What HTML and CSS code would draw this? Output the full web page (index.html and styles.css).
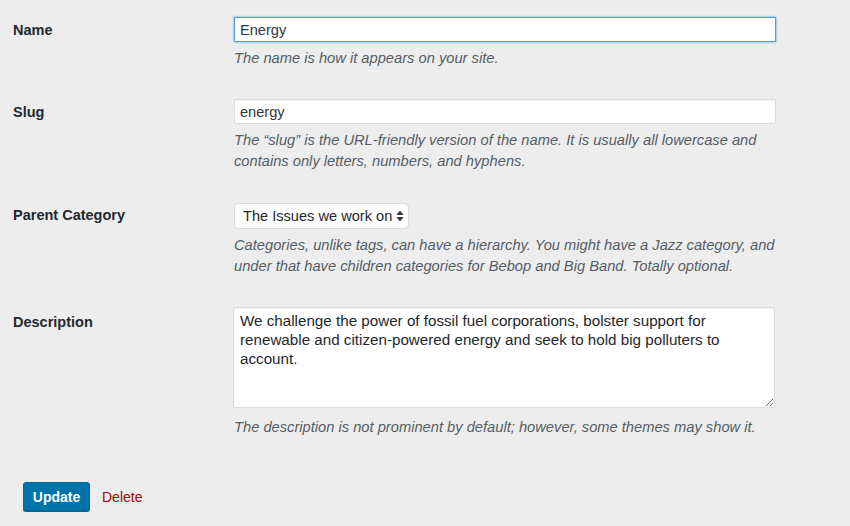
FILE: index.html
```html
<!DOCTYPE html>
<html>
<head>
<meta charset="utf-8">
<link rel="stylesheet" href="styles.css">
</head>
<body>
<form class="form">
  <div class="row">
    <label class="label" for="name">Name</label>
    <div class="field">
      <input id="name" class="input input-focus" type="text" value="Energy">
      <p class="desc">The name is how it appears on your site.</p>
    </div>
  </div>
  <div class="row">
    <label class="label" for="slug">Slug</label>
    <div class="field">
      <input id="slug" class="input" type="text" value="energy">
      <p class="desc">The “slug” is the URL-friendly version of the name. It is usually all lowercase and contains only letters, numbers, and hyphens.</p>
    </div>
  </div>
  <div class="row">
    <label class="label" for="parent">Parent Category</label>
    <div class="field">
      <div class="select">
        <span class="select-text">The Issues we work on</span>
        <svg class="select-arrows" width="8" height="12" viewBox="0 0 8 12"><path d="M4 0.5 L7.5 5 L0.5 5 Z M4 11.5 L7.5 7 L0.5 7 Z" fill="#333"/></svg>
      </div>
      <p class="desc desc-select">Categories, unlike tags, can have a hierarchy. You might have a Jazz category, and under that have children categories for Bebop and Big Band. Totally optional.</p>
    </div>
  </div>
  <div class="row">
    <label class="label label-desc" for="description">Description</label>
    <div class="field">
      <textarea id="description" class="textarea">We challenge the power of fossil fuel corporations, bolster support for renewable and citizen-powered energy and seek to hold big polluters to account.</textarea>
      <p class="desc desc-area">The description is not prominent by default; however, some themes may show it.</p>
    </div>
  </div>
  <div class="actions">
    <button type="button" class="button">Update</button>
    <a class="delete" href="#">Delete</a>
  </div>
</form>
</body>
</html>
```

FILE: styles.css
```css
html, body {
  margin: 0;
  padding: 0;
  background: #ededed;
}
body {
  font-family: "Liberation Sans", Arial, sans-serif;
  font-size: 14px;
  color: #23282d;
  width: 850px;
  height: 526px;
  overflow: hidden;
}
.form {
  padding: 1px 0 0 13px;
  margin: 0;
}
.row {
  display: flex;
  padding: 16px 0 14px;
}
.label {
  flex: none;
  width: 221px;
  font-weight: bold;
  font-size: 14.5px;
  line-height: 20px;
  padding-top: 3px;
  color: #23282d;
}
.label-desc {
  padding-top: 5px;
}
.field {
  width: 542px;
}
.input {
  display: block;
  box-sizing: border-box;
  width: 542px;
  height: 25px;
  margin: 0;
  padding: 0 5px;
  font: 14.6px "Liberation Sans", Arial, sans-serif;
  color: #32373c;
  background: #fff;
  border: 1px solid #dcdcdc;
  box-shadow: inset 0 1px 2px rgba(0,0,0,.07);
  outline: none;
  border-radius: 0;
}
.input-focus {
  border-color: #5b9dd9;
  box-shadow: 0 0 2px rgba(30,140,190,.8);
}
.desc {
  margin: 6px 0 0;
  font-style: italic;
  font-size: 14.7px;
  line-height: 21px;
  color: #555d66;
}
.select {
  box-sizing: border-box;
  display: inline-flex;
  align-items: center;
  height: 26px;
  margin-top: 1px;
  padding: 0 4px 0 8px;
  background: #fff;
  border: 1px solid #dcdcdc;
  border-radius: 4px;
  color: #23282d;
  gap: 4px;
  font-size: 14.6px;
}
.select-text {
  line-height: 20px;
}
.desc-select {
  margin-top: 6px;
}
.textarea {
  display: block;
  box-sizing: border-box;
  width: 542px;
  height: 101px;
  margin: 0 0 0 -1px;
  padding: 3px 6px;
  font: 15.2px/19px "Liberation Sans", Arial, sans-serif;
  color: #23282d;
  background: #fff;
  border: 1px solid #dcdcdc;
  box-shadow: inset 0 1px 2px rgba(0,0,0,.07);
  resize: both;
  outline: none;
}
.desc-area {
  margin-top: 9px;
}
.actions {
  display: flex;
  align-items: center;
  gap: 12px;
  margin: 30px 0 0 10px;
}
.button {
  box-sizing: border-box;
  width: 67px;
  height: 29px;
  padding: 0;
  font: bold 14px "Liberation Sans", Arial, sans-serif;
  color: #fff;
  background: #0073aa;
  border: 1px solid #006799;
  border-radius: 3px;
  box-shadow: 0 1px 0 #006799;
  cursor: pointer;
}
.delete {
  color: #a00;
  text-decoration: none;
  font-size: 14px;
}
```
